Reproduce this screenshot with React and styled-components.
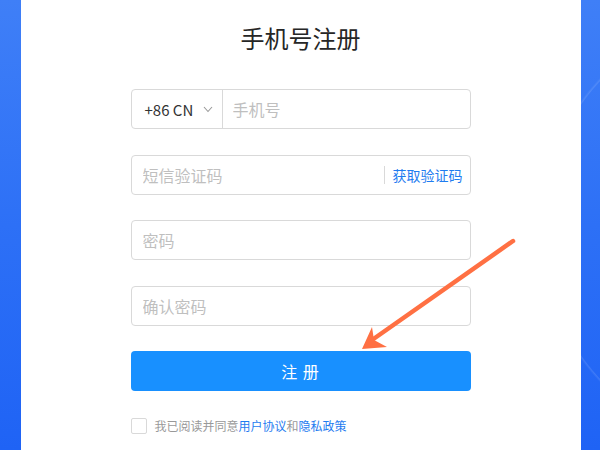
import React from 'react';
import styled, { createGlobalStyle } from 'styled-components';

const GlobalStyle = createGlobalStyle`
    html, body {
        margin: 0;
        padding: 0;
        height: 100%;
    }
    body {
        font-family: "Noto Sans CJK SC", "Noto Sans", sans-serif;
    }
    #root {
        height: 100%;
    }
`;

const Page = styled.div`
    position: relative;
    width: 600px;
    height: 450px;
    overflow: hidden;
    display: flex;
    justify-content: center;
    background:
        radial-gradient(circle at 760px 230px, transparent 218px, rgba(255,255,255,0.12) 219px, transparent 221px),
        linear-gradient(180deg, #3f7ff7 0%, #2d70f6 50%, #1f63f5 100%);
`;

const Panel = styled.div`
    width: 560px;
    margin-left: 1px;
    background: #fff;
    display: flex;
    flex-direction: column;
    align-items: center;
    padding-top: 24px;
    box-sizing: border-box;
`;

const Title = styled.h1`
    margin: 0;
    font-size: 24px;
    line-height: 28px;
    font-weight: 400;
    color: #262626;
    letter-spacing: 0;
`;

const Form = styled.form`
    width: 340px;
    margin-top: 37px;
    display: flex;
    flex-direction: column;
    gap: 25.5px;
`;

const Field = styled.div`
    height: 40px;
    box-sizing: border-box;
    border: 1px solid #d9d9d9;
    border-radius: 4px;
    display: flex;
    align-items: center;
    background: #fff;
`;

const Prefix = styled.div`
    height: 100%;
    width: 91px;
    box-sizing: border-box;
    padding-left: 13px;
    border-right: 1px solid #d9d9d9;
    display: flex;
    align-items: center;
    gap: 10px;
    font-size: 15px;
    color: #333;
`;

const Input = styled.input`
    flex: 1;
    min-width: 0;
    height: 100%;
    border: none;
    outline: none;
    background: transparent;
    padding: 0 0 0 ${p => p.$pad || 11}px;
    font-family: inherit;
    font-size: 16px;
    color: #333;
    &::placeholder {
        color: #bfbfbf;
    }
`;

const CodeButton = styled.button`
    height: 18px;
    border: none;
    border-left: 1px solid #d9d9d9;
    background: transparent;
    padding: 0 7px 0 8px;
    font-family: inherit;
    font-size: 14px;
    line-height: 18px;
    color: #1f7cf0;
    cursor: pointer;
`;

const Submit = styled.button`
    height: 40px;
    border: none;
    border-radius: 4px;
    background: #1890ff;
    color: #fff;
    font-family: inherit;
    font-size: 16px;
    letter-spacing: 1px;
    cursor: pointer;
`;

const Agree = styled.label`
    display: flex;
    align-items: center;
    gap: 8px;
    margin-top: 0.5px;
    font-size: 12px;
    color: #999;
`;

const Box = styled.span`
    width: 16px;
    height: 16px;
    box-sizing: border-box;
    border: 1px solid #d9d9d9;
    border-radius: 2px;
    background: #fff;
`;

const Link = styled.a`
    color: #1f7cf0;
    text-decoration: none;
`;

const Arrow = styled.svg`
    position: absolute;
    left: 0;
    top: 0;
    pointer-events: none;
`;

const App = () => {
    return (
        <Page>
            <GlobalStyle />
            <Panel>
                <Title>手机号注册</Title>
                <Form onSubmit={e => e.preventDefault()}>
                    <Field>
                        <Prefix>
                            <span>+86 CN</span>
                            <svg width="10" height="7" viewBox="0 0 10 7">
                                <path d="M1 1l4 4.5L9 1" fill="none" stroke="#999" strokeWidth="1.1" />
                            </svg>
                        </Prefix>
                        <Input placeholder="手机号" $pad={10} />
                    </Field>
                    <Field>
                        <Input placeholder="短信验证码" />
                        <CodeButton type="button">获取验证码</CodeButton>
                    </Field>
                    <Field>
                        <Input type="password" placeholder="密码" />
                    </Field>
                    <Field>
                        <Input type="password" placeholder="确认密码" />
                    </Field>
                    <Submit type="submit">注 册</Submit>
                    <Agree>
                        <Box />
                        <span>
                            我已阅读并同意<Link href="#">用户协议</Link>和<Link href="#">隐私政策</Link>
                        </span>
                    </Agree>
                </Form>
            </Panel>
            <Arrow width="600" height="450" viewBox="0 0 600 450">
                <line x1="513" y1="241" x2="372" y2="340" stroke="#ff7043" strokeWidth="4.5" strokeLinecap="round" />
                <path d="M362 349 L372 327 L374 340 L387 347 Z" fill="#ff7043" />
            </Arrow>
        </Page>
    );
};

export default App;
